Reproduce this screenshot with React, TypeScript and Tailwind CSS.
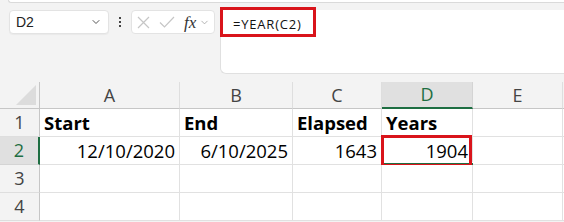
import { ChevronDown } from "lucide-react";

const font = { fontFamily: '"Open Sans", "Liberation Sans", sans-serif' };

const cols = ["A", "B", "C", "D", "E"];

type Cell = { text?: string; bold?: boolean; right?: boolean };

const rows: Cell[][] = [
  [
    { text: "Start", bold: true },
    { text: "End", bold: true },
    { text: "Elapsed", bold: true },
    { text: "Years", bold: true },
    {},
  ],
  [
    { text: "12/10/2020", right: true },
    { text: "6/10/2025", right: true },
    { text: "1643", right: true },
    { text: "1904", right: true },
    {},
  ],
  [{}, {}, {}, {}, {}],
  [{}, {}, {}, {}, {}],
];

// cancel / enter icons of the formula bar, drawn thin like Excel's
const CancelIcon = () => (
  <svg width="13" height="13" viewBox="0 0 13 13" className="shrink-0">
    <path d="M1 1 12 12M12 1 1 12" stroke="#c6c6c6" strokeWidth="1.2" fill="none" />
  </svg>
);

const EnterIcon = () => (
  <svg width="16" height="12" viewBox="0 0 16 12" className="shrink-0">
    <path d="M1 6.5 5.5 11 15 1" stroke="#c6c6c6" strokeWidth="1.2" fill="none" />
  </svg>
);

const FormulaRow = () => (
  <div className="flex h-[64px] mt-[7px]">
    <div className="ml-[9px] w-[100px] h-[24px] bg-white border border-[#e3e3e3] rounded-[4px] flex items-center justify-between pl-[6px] pr-[6px] shadow-[0_1px_1px_rgba(0,0,0,0.04)]">
      <span className="text-[14px] text-[#222]" style={{ fontFamily: '"Liberation Sans", sans-serif' }}>
        D2
      </span>
      <ChevronDown className="w-[12px] h-[12px] text-[#555]" strokeWidth={2} />
    </div>
    <div className="w-[22px] h-[24px] flex flex-col items-center justify-center gap-[2px]">
      <span className="w-[2px] h-[2px] bg-[#444]" />
      <span className="w-[2px] h-[2px] bg-[#444]" />
      <span className="w-[2px] h-[2px] bg-[#444]" />
    </div>
    <div className="w-[84px] h-[24px] bg-white border border-[#e3e3e3] rounded-[4px] flex items-center pl-[5px]">
      <CancelIcon />
      <span className="ml-[9px]">
        <EnterIcon />
      </span>
      <span
        className="ml-[9px] text-[17px] italic text-[#333] leading-none"
        style={{ fontFamily: '"Liberation Serif", serif' }}
      >
        fx
      </span>
      <ChevronDown className="w-[11px] h-[11px] text-[#999] ml-[3px]" strokeWidth={1.6} />
    </div>
    <div className="relative ml-[5px] flex-1 bg-white border-l border-b border-[#e0e0e0] rounded-bl-[6px]">
      <div className="absolute left-[-1px] top-[-3px] w-[96px] h-[30px] border-[3px] border-[#d9141b]" />
      <span className="absolute left-[12px] top-[5px] text-[13px] tracking-[0.8px] text-[#111]" style={font}>
        =YEAR(C2)
      </span>
    </div>
  </div>
);

const Sheet = () => (
  <div
    className="mt-[8px] grid grid-cols-[40px_140px_113px_89px_91px_90px_1fr] grid-rows-[27px_28px_28px_28px_28px]"
    style={font}
  >
    <div className="bg-[#f3f3f3] border-b border-r border-[#c6c6c6] relative">
      <div className="absolute right-[3px] bottom-[3px] w-0 h-0 border-l-[20px] border-l-transparent border-b-[20px] border-b-[#dcdcdc]" />
    </div>
    {cols.map((c) => (
      <div
        key={c}
        className={
          c === "D"
            ? "bg-[#e0e0e0] border-b-[2px] border-b-[#1e6e42] border-r border-r-[#d4d4d4] flex items-center justify-center text-[18px] text-[#1e6e42]"
            : "bg-[#f3f3f3] border-b border-b-[#c6c6c6] border-r border-r-[#dedede] flex items-center justify-center text-[18px] text-[#444]"
        }
      >
        {c}
      </div>
    ))}
    <div className="bg-[#f3f3f3] border-b border-[#c6c6c6]" />
    {rows.map((r, i) => (
      <div key={i} className="contents">
        <div
          className={
            i === 1
              ? "bg-[#e0e0e0] border-r-[2px] border-r-[#1e6e42] border-b border-b-[#d4d4d4] flex items-center justify-center text-[18px] text-[#1e6e42]"
              : "bg-[#f3f3f3] border-r border-r-[#c6c6c6] border-b border-b-[#dedede] flex items-center justify-center text-[18px] text-[#444]"
          }
        >
          {i + 1}
        </div>
        {r.map((cell, j) => (
          <div
            key={j}
            className={
              "relative bg-white border-r border-b border-[#e1e1e1] flex items-center px-[4px] text-[18.5px] text-black whitespace-nowrap " +
              (cell.right ? "justify-end " : "justify-start ") +
              (cell.bold ? "font-bold" : "")
            }
          >
            {cell.text}
            {i === 1 && j === 3 && (
              <>
                <div className="absolute left-[0px] right-[-1px] bottom-[-1px] h-[2px] bg-[#1e6e42]" />
                <div className="absolute right-[-3px] bottom-[-3px] w-[5px] h-[5px] bg-[#1e6e42] border border-white" />
                <div className="absolute left-[-1px] top-[-2px] right-[0px] bottom-[-3px] border-[3px] border-[#d9141b]" />
              </>
            )}
          </div>
        ))}
        <div className="bg-white border-b border-[#e1e1e1]" />
      </div>
    ))}
  </div>
);

export default function App() {
  return (
    <div className="w-[564px] h-[222px] overflow-hidden bg-[#f3f3f3] flex flex-col">
      <div className="h-[3px] ml-[8px] bg-white border-l border-b border-[#dadada] rounded-bl-[5px]" />
      <FormulaRow />
      <Sheet />
    </div>
  );
}
